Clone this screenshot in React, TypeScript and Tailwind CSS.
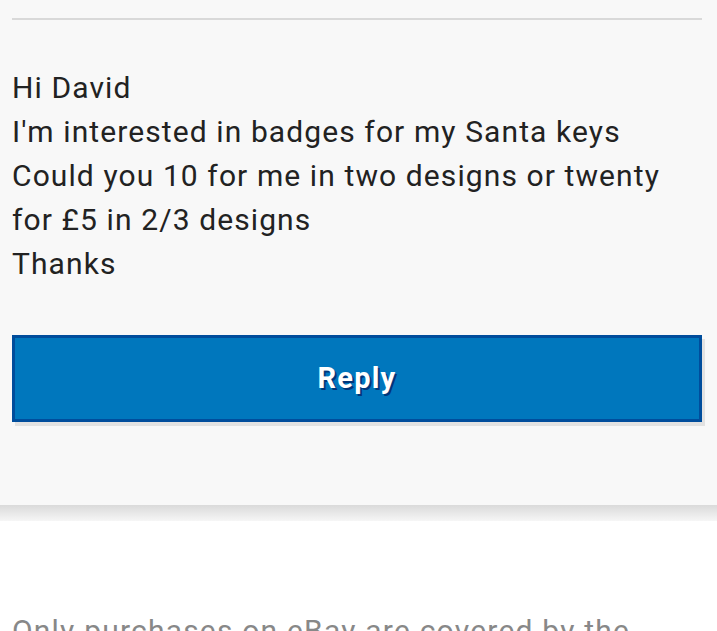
export default function App() {
  const lines = [
    "Hi David",
    "I'm interested in badges for my Santa keys",
    "Could you 10 for me in two designs or twenty",
    "for £5 in 2/3 designs",
    "Thanks",
  ];
  return (
    <div className="w-[717px] h-[631px] overflow-hidden bg-white font-['Roboto',sans-serif]">
      <div className="bg-[#f8f8f8] pl-[12px] pr-[15px] pt-[18px] h-[505px]">
        <div className="h-[2px] bg-[#d9d9d9]" />
        <div className="mt-[46px] text-[30px] leading-[44px] tracking-[1.1px] text-[#222]">
          {lines.map((l) => (
            <div key={l}>{l}</div>
          ))}
        </div>
        <button className="mt-[49px] w-full h-[87px] bg-[#0077bd] border-[3px] border-[#004d9c] shadow-[3px_4px_0_0_#e2e2e2] text-white text-[29px] font-bold tracking-[1.2px] [text-shadow:2px_2px_0_#00367a]">
          Reply
        </button>
      </div>
      <div className="h-[16px] bg-gradient-to-b from-[#dadada] to-[#f6f6f6]" />
      <div className="pl-[12px] pt-[88px] text-[30px] leading-[44px] tracking-[1.2px] text-[#888] whitespace-nowrap">
        Only purchases on eBay are covered by the
      </div>
    </div>
  );
}
